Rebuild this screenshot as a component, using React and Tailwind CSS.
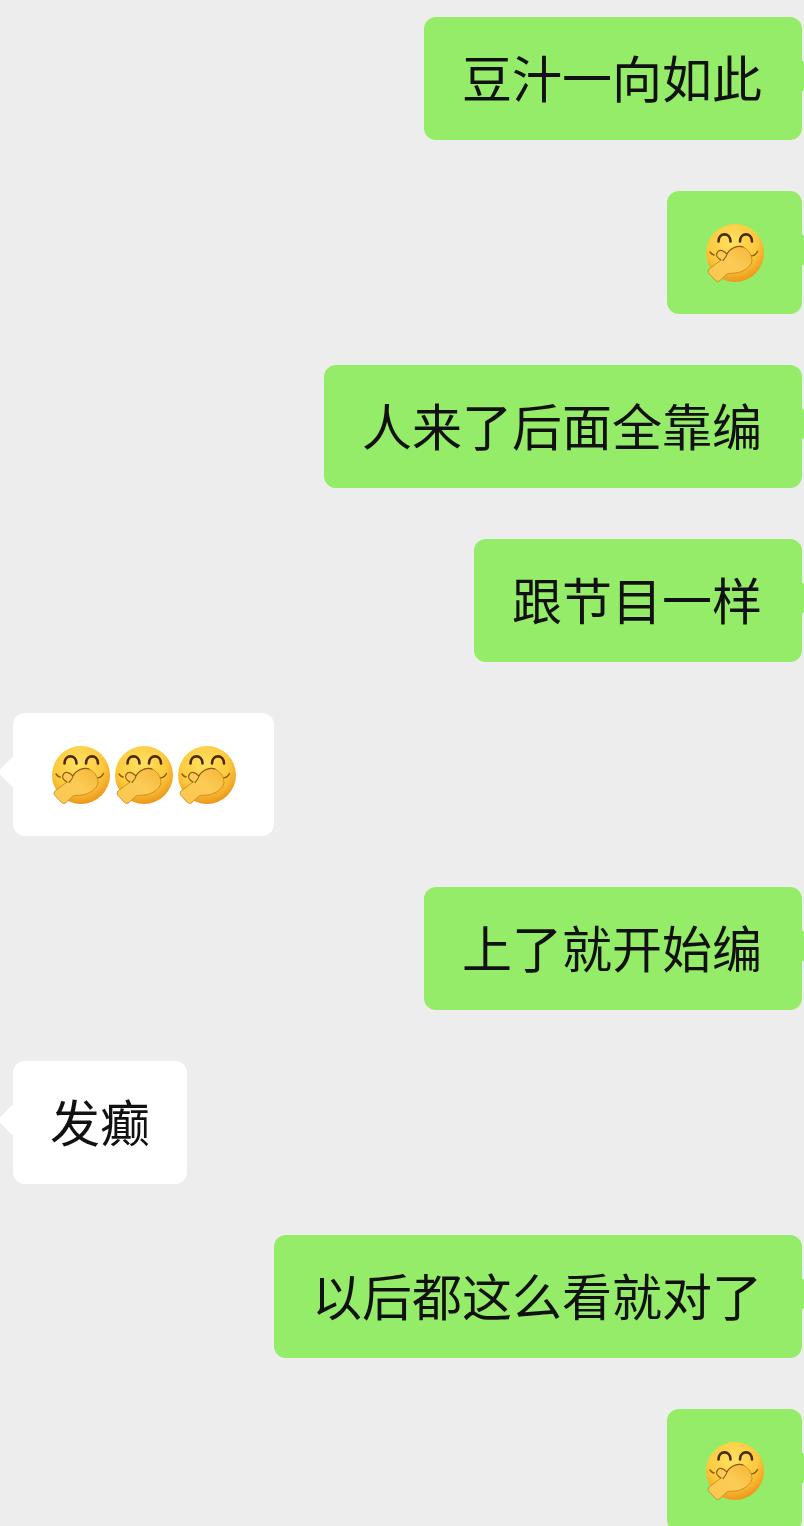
import React from "react";

const messages = [
  { me: true, text: "豆汁一向如此" },
  { me: true, emoji: 1 },
  { me: true, text: "人来了后面全靠编" },
  { me: true, text: "跟节目一样" },
  { me: false, emoji: 3 },
  { me: true, text: "上了就开始编" },
  { me: false, text: "发癫" },
  { me: true, text: "以后都这么看就对了" },
  { me: true, emoji: 1 },
];

function CoverMouth({ id }) {
  return (
    <svg width="60" height="60" viewBox="0 0 60 60" className="shrink-0">
      <defs>
        <radialGradient id={id} cx="45%" cy="32%" r="72%">
          <stop offset="0%" stopColor="#ffe163" />
          <stop offset="60%" stopColor="#fdc93c" />
          <stop offset="100%" stopColor="#ea8f16" />
        </radialGradient>
        <linearGradient id={id + "h"} x1="0" y1="1" x2="1" y2="0">
          <stop offset="0%" stopColor="#fbc850" />
          <stop offset="55%" stopColor="#fbcb55" />
          <stop offset="100%" stopColor="#f6b538" />
        </linearGradient>
      </defs>
      <circle cx="30" cy="30" r="29" fill={`url(#${id})`} />
      {/* eyes */}
      <path d="M13.500 18.500c0-9.500 12-9.500 12 0M35 18.500c0-9.500 12-9.500 12 0" fill="none" stroke="#4a2a06" strokeWidth="2.600" strokeLinecap="round" />
      {/* cheeks */}
      <path d="M46 33c3 0 5-1.500 6.500-4.500M9 32c-1.500-.5-3-1.500-4-3" fill="none" stroke="#8a5a10" strokeWidth="1.500" strokeLinecap="round" />
      {/* hand */}
      <path
        d="M4 46 16 37C12 35 11 32 12 30 13 27 16 27 18 28 20 29 21 30 22 31 25 25 33 22 38 24 44 27 47 32 47 38 46 44 38 49 31 50 27 50.500 24 50 22 51L15 57.500C13.500 59 12 58.500 10.500 57.500L4 50.500C2.800 49 2.800 47 4 46Z"
        fill={`url(#${id}h)`}
        stroke="#c4831a"
        strokeWidth=".8"
        strokeLinejoin="round"
      />
      {/* finger and palm edge */}
      <path
        d="M16 37C12 35 11 32 12 30 13 27 16 27 18 28 20 29 21 30 22 31 25 25 33 22 38 24M22 31c-.5 2.500-2 4.500-4 6.500"
        fill="none"
        stroke="#8f5a0e"
        strokeWidth="1.100"
        strokeLinecap="round"
      />
    </svg>
  );
}

function Bubble({ me, text, emoji, index }) {
  const padding = text
    ? me
      ? "pl-[38px] pr-[40px]"
      : "pl-[37px] pr-[37px]"
    : "pl-[38px] pr-[37px]";

  return (
    <div className={`flex ${me ? "justify-end pr-[2px]" : "justify-start pl-[13px]"}`}>
      <div
        className={`relative flex h-[123px] items-center rounded-[12px] text-[50px] leading-none text-[#111111] ${padding} ${
          me ? "bg-[#95ec69]" : "bg-white"
        }`}
      >
        {me ? (
          <span className="absolute top-[47px] -right-[11px] size-[24px] rotate-45 rounded-[3px] bg-[#95ec69]" />
        ) : (
          <span className="absolute top-[48px] -left-[11px] size-[22px] rotate-45 rounded-[2px] bg-white" />
        )}
        {text ? (
          <span className="relative -top-[3px]">{text}</span>
        ) : (
          <span className="relative flex gap-[3px]">
            {Array.from({ length: emoji }).map((_, i) => (
              <CoverMouth key={i} id={`e${index}-${i}`} />
            ))}
          </span>
        )}
      </div>
    </div>
  );
}

export default function App() {
  return (
    <div className="flex h-[1526px] flex-col gap-[51px] overflow-hidden bg-[#ededed] pt-[17px] font-['Noto_Sans_CJK_SC','Noto_Sans_CJK_JP',sans-serif]">
      {messages.map((m, i) => (
        <Bubble key={i} index={i} {...m} />
      ))}
    </div>
  );
}
